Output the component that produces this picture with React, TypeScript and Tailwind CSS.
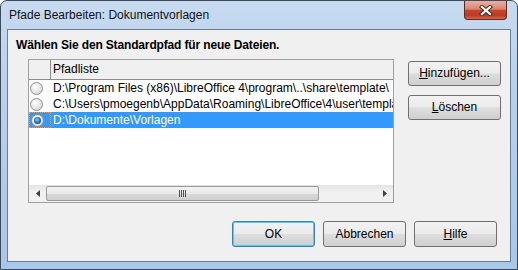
import React from 'react';

function Btn({ className, children }: { className: string; children: React.ReactNode }) {
  return (
    <div
      className={`h-[26px] rounded-[3px] border flex items-center justify-center text-[12px] text-black bg-[linear-gradient(#f2f2f2,#ebebeb_48%,#dddddd_52%,#cfcfcf)] ${className}`}
    >
      {children}
    </div>
  );
}

function Radio({ checked }: { checked?: boolean }) {
  return (
    <span className="w-[13px] h-[13px] rounded-full border border-[#8e8f8f] bg-[radial-gradient(circle_at_40%_35%,#ffffff,#e2e2e2_60%,#cdcdcd)] flex items-center justify-center">
      {checked && (
        <span className="w-[7px] h-[7px] rounded-full bg-[radial-gradient(circle_at_45%_40%,#7fd8ff,#1b6aa8_55%,#0c2f52)]" />
      )}
    </span>
  );
}

function Arrow({ dir }: { dir: 'l' | 'r' }) {
  return (
    <svg width="4" height="7" viewBox="0 0 4 7">
      {dir === 'l' ? <path d="M4 0 L0 3.5 L4 7 Z" fill="#404040" /> : <path d="M0 0 L4 3.5 L0 7 Z" fill="#404040" />}
    </svg>
  );
}

const rows = [
  'D:\\Program Files (x86)\\LibreOffice 4\\program\\..\\share\\template\\',
  'C:\\Users\\pmoegenb\\AppData\\Roaming\\LibreOffice\\4\\user\\template',
  'D:\\Dokumente\\Vorlagen',
];

export default function App() {
  return (
    <div className="w-[518px] h-[270px] bg-white font-['Liberation_Sans',Arial,sans-serif] text-[12px] leading-[15px] text-black">
      <div className="w-full h-full rounded-t-[7px] border border-[#3d4b5c] bg-[linear-gradient(#c7dbf0,#b9d1ec_30%,#a9c7e9)] flex flex-col px-[6px] pb-[7px]">
        {/* title bar */}
        <div className="h-[28px] flex justify-between -mx-[6px]">
          <div className="pl-[8px] pt-[7px] text-[#111]">Pfade Bearbeiten: Dokumentvorlagen</div>
          <div className="mr-[10px] w-[43px] h-[19px] rounded-b-[4px] border border-t-0 border-[#5c2a22] bg-[linear-gradient(#eab0a2,#d98672_45%,#c5452d_52%,#bf3a22_80%,#d56a4d)] flex items-center justify-center">
            <svg width="14" height="11" viewBox="0 0 14 11">
              <path d="M3 2 L11 9 M11 2 L3 9" stroke="#4a2a26" strokeWidth="4.2" strokeLinecap="square" />
              <path d="M3 2 L11 9 M11 2 L3 9" stroke="#ffffff" strokeWidth="2.2" strokeLinecap="square" />
            </svg>
          </div>
        </div>

        {/* client area */}
        <div className="flex-1 border border-[#6b7d93] bg-[#f0f0f0] flex flex-col">
          <div className="pl-[8px] mt-[8px] font-bold tracking-[-0.15px]">Wählen Sie den Standardpfad für neue Dateien.</div>

          <div className="flex mt-[6px] pl-[20px]">
            {/* list */}
            <div className="w-[366px] h-[144px] border border-[#a0a0a0] bg-white flex flex-col overflow-hidden">
              <div className="h-[20px] flex bg-[#f0f0f0] border-b border-[#8a8a8a]">
                <div className="w-[22px] border-r border-[#8a8a8a]" />
                <div className="pl-[2px] flex items-center">Pfadliste</div>
              </div>
              <div className="flex-1 flex flex-col">
                {rows.map((r, i) => {
                  const sel = i === 2;
                  return (
                    <div key={r} className={`h-[16px] flex items-center whitespace-nowrap ${sel ? 'bg-[#3399ff] text-white' : ''}`}>
                      <div className={`w-[22px] h-[16px] shrink-0 flex items-center pl-[1px] ${sel ? 'border border-dotted border-[#e0a060]' : ''}`}>
                        <Radio checked={sel} />
                      </div>
                      <div className="pl-[2px]">{r}</div>
                    </div>
                  );
                })}
              </div>
              {/* horizontal scrollbar */}
              <div className="h-[17px] flex bg-[linear-gradient(#e3e3e3,#f1f1f1_40%,#f1f1f1)]">
                <div className="w-[17px] flex items-center justify-center">
                  <Arrow dir="l" />
                </div>
                <div className="flex-1 flex py-[1px]">
                  <div className="w-[273px] rounded-[2px] border border-[#9a9a9a] bg-[linear-gradient(#f4f4f4,#e8e8e8_50%,#d8d8d8_52%,#cfcfcf)] flex items-center justify-center gap-[1px]">
                    <span className="w-[1px] h-[7px] bg-[#505050]" />
                    <span className="w-[1px] h-[7px] bg-[#505050]" />
                    <span className="w-[1px] h-[7px] bg-[#505050]" />
                    <span className="w-[1px] h-[7px] bg-[#505050]" />
                  </div>
                </div>
                <div className="w-[17px] flex items-center justify-center">
                  <Arrow dir="r" />
                </div>
              </div>
            </div>

            {/* side buttons */}
            <div className="ml-[14px] mt-[2px] flex flex-col gap-[9px]">
              <Btn className="w-[93px] !h-[25px] border-[#707070]">
                <span><span className="underline">H</span>inzufügen...</span>
              </Btn>
              <Btn className="w-[93px] !h-[25px] border-[#707070]">
                <span><span className="underline">L</span>öschen</span>
              </Btn>
            </div>
          </div>

          <div className="mt-[18px] flex justify-end gap-[8px] pr-[13px]">
            <Btn className="w-[83px] border-[#3c7fb1] shadow-[inset_0_0_0_1px_#4fcff6]">OK</Btn>
            <Btn className="w-[83px] border-[#707070]">Abbrechen</Btn>
            <Btn className="w-[83px] border-[#707070]">
              <span><span className="underline">H</span>ilfe</span>
            </Btn>
          </div>
        </div>
      </div>
    </div>
  );
}
